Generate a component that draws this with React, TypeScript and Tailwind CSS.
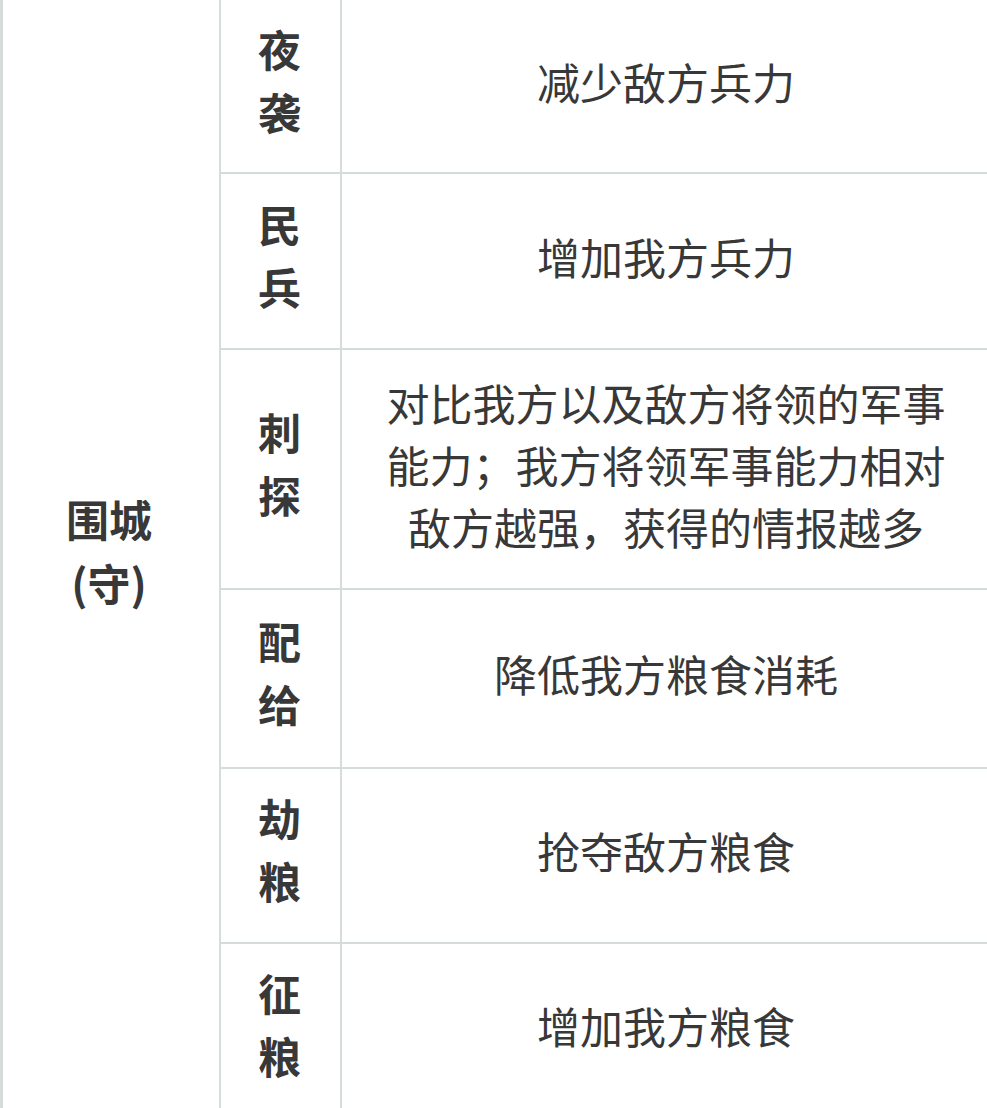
import React from "react";

const rows: { label: string; desc: string; h: string }[] = [
  { label: "夜袭", desc: "减少敌方兵力", h: "h-[174px]" },
  { label: "民兵", desc: "增加我方兵力", h: "h-[176px]" },
  { label: "刺探", desc: "对比我方以及敌方将领的军事能力；我方将领军事能力相对敌方越强，获得的情报越多", h: "h-[240px]" },
  { label: "配给", desc: "降低我方粮食消耗", h: "h-[179px]" },
  { label: "劫粮", desc: "抢夺敌方粮食", h: "h-[175px]" },
  { label: "征粮", desc: "增加我方粮食", h: "h-[175px]" },
];

export default function App() {
  return (
    <div
      className="w-[987px] h-[1108px] overflow-hidden bg-white text-[#383838]"
      style={{ fontFamily: '"Noto Sans CJK SC", "Noto Sans", sans-serif' }}
    >
      <div className="flex">
        <div className="w-[221px] shrink-0 border-l-[3px] border-r-2 border-[#d6dbdb] flex items-center justify-center pb-[20px]">
          <div className="text-center font-bold text-[43px] leading-[64px] -ml-[4px]">
            围城
            <br />
            (守)
          </div>
        </div>
        <div className="flex-1 flex flex-col">
          {rows.map((r, i) => (
            <div key={i} className={`flex border-b-2 border-[#d6dbdb] ${r.h}`}>
              <div className="w-[121px] shrink-0 border-r-2 border-[#d6dbdb] flex items-center justify-center pb-[13px]">
                <div className="w-[44px] text-center font-bold text-[43px] leading-[63px] -ml-[2px] break-all">
                  {r.label}
                </div>
              </div>
              <div className="flex-1 flex items-center justify-center px-[40px] pb-[11px]">
                <div className="text-center text-[43px] leading-[62px] ml-[3px]">{r.desc}</div>
              </div>
            </div>
          ))}
        </div>
      </div>
    </div>
  );
}
